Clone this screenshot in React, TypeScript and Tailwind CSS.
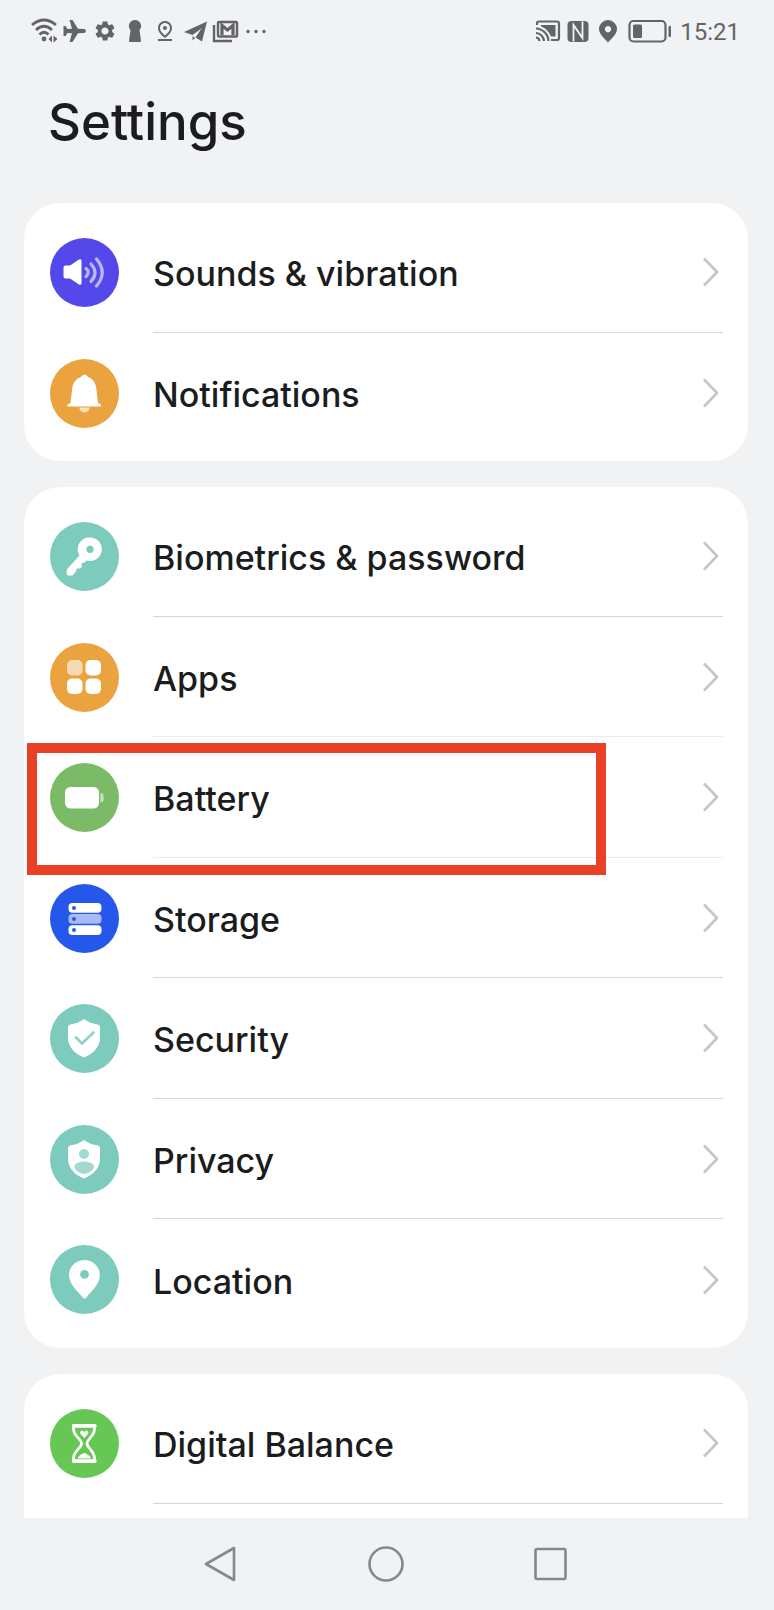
import type { ReactNode } from 'react';
import { MdOutlinePinDrop, MdSettings } from 'react-icons/md';

type Item = {
  label: string;
  color: string;
  icon: ReactNode;
  divider?: string;
  highlighted?: boolean;
};

const LINE = 'border-[#d6d6d6]';
const FAINT = 'border-[#ececec]';

const SHIELD = 'M34 15 C38 18 43 20 48 20.5 Q50 21 50 23 V34 C50 43 43 50 34 53.5 C25 50 18 43 18 34 V23 Q18 21 20 20.5 C25 20 30 18 34 15Z';

const GROUPS: Item[][] = [
  [
    { label: 'Sounds & vibration', color: 'bg-[#5548ea]', icon: <SoundIcon />, divider: LINE },
    { label: 'Notifications', color: 'bg-[#eaa33f]', icon: <BellIcon /> },
  ],
  [
    { label: 'Biometrics & password', color: 'bg-[#7dcbbc]', icon: <KeyIcon />, divider: LINE },
    { label: 'Apps', color: 'bg-[#eaa33f]', icon: <AppsIcon />, divider: FAINT },
    { label: 'Battery', color: 'bg-[#7bba67]', icon: <BatteryIcon />, divider: FAINT, highlighted: true },
    { label: 'Storage', color: 'bg-[#2558ea]', icon: <StorageIcon />, divider: LINE },
    { label: 'Security', color: 'bg-[#7dcbbc]', icon: <SecurityIcon />, divider: LINE },
    { label: 'Privacy', color: 'bg-[#7dcbbc]', icon: <PrivacyIcon />, divider: LINE },
    { label: 'Location', color: 'bg-[#7dcbbc]', icon: <LocationIcon /> },
  ],
];

export default function App() {
  return (
    <div className="flex min-h-screen flex-col bg-[#f1f2f4] font-['Inter',sans-serif] text-[#1b1c1e]">
      <StatusBar />

      <header className="flex h-[142px] items-center pl-12">
        <h1 className="pb-5 text-[51px] leading-[60px] font-medium">Settings</h1>
      </header>

      <main className="flex flex-1 flex-col gap-[26px] pr-[26px] pl-6">
        {GROUPS.map((items, i) => (
          <ul key={i} className="rounded-[36px] bg-white pt-[9px] pb-2">
            {items.map((item) => (
              <Row key={item.label} item={item} />
            ))}
          </ul>
        ))}
        {/* last group runs under the navigation bar */}
        <ul className="flex-1 rounded-t-[36px] bg-white pt-[9px] pb-[14px]">
          <Row item={{ label: 'Digital Balance', color: 'bg-[#66c755]', icon: <HourglassIcon />, divider: LINE }} />
        </ul>
      </main>

      <nav className="flex h-[92px] items-center justify-center gap-[129px] pr-0.5" aria-label="System">
        <button type="button" aria-label="Back">
          <svg viewBox="0 0 36 36" className="size-9" fill="none" stroke="#87888a" strokeWidth="2.6" strokeLinejoin="round">
            <path d="M3 18 L31 2 V34Z" />
          </svg>
        </button>
        <button type="button" aria-label="Home">
          <svg viewBox="0 0 36 36" className="size-9" fill="none" stroke="#87888a" strokeWidth="2.6">
            <circle cx="18" cy="18" r="16.5" />
          </svg>
        </button>
        <button type="button" aria-label="Recent apps">
          <svg viewBox="0 0 36 36" className="size-9" fill="none" stroke="#87888a" strokeWidth="2.6">
            <rect x="2.5" y="3" width="30" height="30" rx="1.5" />
          </svg>
        </button>
      </nav>
    </div>
  );
}

function Row({ item }: { item: Item }) {
  return (
    <li className="relative odd:h-[121px] even:h-[120px]">
      <a href="#" className="flex h-full items-center gap-[34px] pr-[25px] pl-[26px]">
        <span className={`size-[69px] shrink-0 rounded-full ${item.color}`}>{item.icon}</span>
        <span className={`flex flex-1 items-center justify-between self-stretch pr-1 ${item.divider ? `border-b ${item.divider}` : ''}`}>
          <span className="pt-1 text-[34px] leading-[44px] font-medium">{item.label}</span>
          <svg viewBox="0 0 16 30" className="h-[30px] w-4" fill="none" stroke="#c6c6c6" strokeWidth="2.6" strokeLinejoin="round">
            <path d="M1 1.5 L14 15 L1 28.5" />
          </svg>
        </span>
      </a>
      {item.highlighted && (
        <div className="pointer-events-none absolute top-[6px] -bottom-[17px] left-[3px] w-4/5 border-10 border-[#ea4025]" />
      )}
    </li>
  );
}

function StatusBar() {
  return (
    <div className="flex h-[61px] items-center justify-between pr-[34px] pl-[31px] text-[#636466]">
      <div className="flex items-center gap-0.5">
        <StatusIcon>
          <g fill="none" stroke="currentColor" strokeWidth="2.8">
            <path d="M1 8 Q13 -2 25 8" />
            <path d="M5 13 Q13 5.5 21 13" />
            <path d="M8.5 17.5 Q13 13 17.5 17.5" />
          </g>
          <circle cx="13" cy="22" r="2.4" />
          <path d="M21 18.5 V25.5 L17.5 22Z M22.5 18.5 V25.5 L26.5 22Z" />
        </StatusIcon>
        <StatusIcon>
          <path d="M23 12 Q25 12.300 25 14 Q25 15.700 23 16 L17 16.300 L11.500 25 H8.500 L11 16.300 L6.500 16 L4.500 19 H2.500 V9 H4.500 L6.500 12 L11 11.700 L8.500 3 H11.500 L17 11.700Z" />
        </StatusIcon>
        <span className="flex w-7 justify-center">
          <MdSettings className="size-6" />
        </span>
        <StatusIcon>
          <path d="M14 3 a6 6 0 0 1 4.5 10 L20 24 q0 1 -1 1 H9 q-1 0 -1 -1 L9.5 13 A6 6 0 0 1 14 3Z" />
        </StatusIcon>
        <span className="flex w-7 justify-center">
          <MdOutlinePinDrop className="size-6" />
        </span>
        <StatusIcon>
          <path d="M3 15 L26 4.5 L21 24.5 L14.5 20.5 L20.5 11.5 L11.5 18 Z" />
          <path d="M11.5 19 L14 21 L11.5 23.5Z" />
        </StatusIcon>
        <StatusIcon>
          <g fill="none" stroke="currentColor" strokeWidth="2.4">
            <path d="M3 8 V24 H21" />
            <rect x="7" y="5" width="19" height="14.5" rx="1" />
            <path d="M11 18 V8.5 L16.5 13 L22 8.5 V18" strokeWidth="3.2" />
          </g>
        </StatusIcon>
        <StatusIcon>
          <circle cx="7" cy="14.5" r="1.7" />
          <circle cx="15" cy="14.5" r="1.7" />
          <circle cx="23" cy="14.5" r="1.7" />
        </StatusIcon>
      </div>

      <div className="flex items-center gap-0.5">
        <StatusIcon>
          <g fill="none" stroke="currentColor" strokeWidth="2.2">
            <path d="M3 8 V6 Q3 4.5 5 4.5 H23 Q25 4.5 25 6.5 V21 Q25 23 23 23 H17" />
            <path d="M2 11.5 A13 13 0 0 1 14.5 24" />
            <path d="M2 16 A8.5 8.5 0 0 1 10 24" />
            <path d="M2 20.5 A4 4 0 0 1 5.5 24" />
          </g>
          <path d="M7 8 H21.5 V19.5 H17 Q14 12 7 9.5Z" />
        </StatusIcon>
        <StatusIcon>
          <rect x="3.5" y="4" width="21" height="21" rx="4" />
          <path d="M9.5 24.5 V8 L18.5 21 V4.5" fill="none" stroke="#f1f2f4" strokeWidth="1.8" />
        </StatusIcon>
        <StatusIcon>
          <path
            fillRule="evenodd"
            d="M14 3 A9 9 0 0 1 23 12 C23 17 18 21 14 25.5 C10 21 5 17 5 12 A9 9 0 0 1 14 3Z M14 9 a3.2 3.2 0 1 0 0.01 0Z"
          />
        </StatusIcon>
        <svg viewBox="0 0 44 28" className="ml-1 h-7 w-11" fill="currentColor">
          <rect x="1.5" y="4" width="36" height="20.5" rx="4" fill="none" stroke="currentColor" strokeWidth="2.2" />
          <rect x="5" y="7.5" width="9" height="13.5" rx="1.5" />
          <rect x="40.5" y="9" width="2.5" height="11" rx="1" />
        </svg>
        <time className="ml-1.5 pt-0.5 font-['Roboto',sans-serif] text-2xl leading-7">15:21</time>
      </div>
    </div>
  );
}

function StatusIcon({ children }: { children: ReactNode }) {
  return (
    <svg viewBox="0 0 28 28" className="size-7" fill="currentColor">
      {children}
    </svg>
  );
}

function Glyph({ children }: { children: ReactNode }) {
  return (
    <svg viewBox="0 0 69 69" className="size-full" fill="#fff" aria-hidden="true">
      {children}
    </svg>
  );
}

function SoundIcon() {
  return (
    <Glyph>
      <path d="M15.5 27.5 H20 L29 21.5 Q31.5 20.5 31.5 23 V45 Q31.5 47.5 29 46.5 L20 40.5 H15.5 Q13.5 40.5 13.5 38.5 V29.5 Q13.5 27.5 15.5 27.5Z" />
      <g fill="none" stroke="#fff" strokeWidth="3.2" strokeLinecap="round" opacity="0.6">
        <path d="M36 30.5 Q40.5 34 36 38.5" />
        <path d="M41 26 Q49 34.5 41 43.5" />
        <path d="M46.5 21 Q58 34.5 46.5 48" />
      </g>
    </Glyph>
  );
}

function BellIcon() {
  return (
    <Glyph>
      <path d="M34.5 15.5 C36.5 15.5 37 17.5 39 18.5 C44 20.5 46 25 46.5 31 L48 44 L51 45.5 V47.5 H17.5 V45.5 L20.5 44 L22 31 C22.5 25 25 20.5 30 18.5 C32 17.5 32.5 15.5 34.5 15.5Z" />
      <path d="M29 48.5 H40 Q38.5 53.5 34.5 53.5 Q30.5 53.5 29 48.5Z" opacity="0.65" />
    </Glyph>
  );
}

function KeyIcon() {
  return (
    <Glyph>
      <path
        fillRule="evenodd"
        d="M40 15.6 a11.7 11.7 0 1 1 -3.5 22.8 L34.5 40.5 L31.7 41 V45 L30 46.5 L26.5 46.5 L26 49.5 L22.5 53.5 H18 Q16.8 53.5 16.8 52 V47.5 L29.5 33.5 A11.7 11.7 0 0 1 40 15.6Z M40 23.6 a3.7 3.7 0 1 0 0.01 0Z"
      />
    </Glyph>
  );
}

function AppsIcon() {
  return (
    <Glyph>
      <rect x="17" y="17" width="15.5" height="15.5" rx="5" opacity="0.6" />
      <rect x="35.5" y="17" width="15.5" height="15.5" rx="5" />
      <rect x="17" y="35.5" width="15.5" height="15.5" rx="5" />
      <rect x="35.5" y="35.5" width="15.5" height="15.5" rx="5" />
    </Glyph>
  );
}

function BatteryIcon() {
  return (
    <Glyph>
      <rect x="15" y="24" width="34" height="21.5" rx="5.5" />
      <path d="M50.5 30 Q53.5 30 53.5 33 V36.5 Q53.5 39.5 50.5 39.5Z" opacity="0.6" />
    </Glyph>
  );
}

function StorageIcon() {
  return (
    <Glyph>
      <rect x="18.5" y="19" width="33" height="9.8" rx="4" />
      <rect x="18.5" y="30" width="33" height="9.8" rx="4" opacity="0.6" />
      <rect x="18.5" y="41.2" width="33" height="9.8" rx="4" />
      <g fill="#2558ea">
        <circle cx="24" cy="23.9" r="2" />
        <circle cx="24" cy="34.9" r="2" />
        <circle cx="24" cy="46.1" r="2" />
      </g>
    </Glyph>
  );
}

function SecurityIcon() {
  return (
    <Glyph>
      <path d={SHIELD} />
      <path d="M26 33.5 L32 39.5 L43.5 28.5" fill="none" stroke="#93d3c7" strokeWidth="2.8" strokeLinecap="round" strokeLinejoin="round" />
    </Glyph>
  );
}

function PrivacyIcon() {
  return (
    <Glyph>
      <path d={SHIELD} />
      <circle cx="34" cy="29" r="5" fill="#a3dacf" />
      <path d="M34 36.5 C40 36.5 44 39 44 41.5 C44 45 38 49 34 49 C30 49 24.5 45 24.5 41.5 C24.5 39 28 36.5 34 36.5Z" fill="#a3dacf" />
    </Glyph>
  );
}

function LocationIcon() {
  return (
    <Glyph>
      <path d="M34.5 15 C43 15 49.8 21.5 49.8 30 C49.8 40 41 46 36.5 52.5 Q34.5 54.5 32.5 52.5 C28 46 19 40 19 30 C19 21.5 26 15 34.5 15Z" />
      <circle cx="34.5" cy="29.3" r="4.4" fill="#7dcbbc" />
    </Glyph>
  );
}

function HourglassIcon() {
  return (
    <Glyph>
      <path
        d="M23.5 16.5 H44.5 V20 C44.5 27 37 30 37 34.5 C37 39 44.5 42 44.5 49 V52.5 H23.5 V49 C23.5 42 31.5 39 31.5 34.5 C31.5 30 23.5 27 23.5 20Z"
        fill="none"
        stroke="#fff"
        strokeWidth="2.8"
        strokeLinejoin="round"
      />
      <path d="M23.5 17 H45 M23.5 52 H45" stroke="#fff" strokeWidth="3.5" strokeLinecap="round" />
      <path d="M34.3 29 L30.5 25 Q29.5 22 32 21.5 Q33.5 21.5 34.3 23 Q35 21.5 36.8 21.5 Q39 22 38 25Z" />
      <path d="M27.5 49.5 Q29 45.5 34.3 44 Q39.5 45.5 41 49.5Z" />
    </Glyph>
  );
}
